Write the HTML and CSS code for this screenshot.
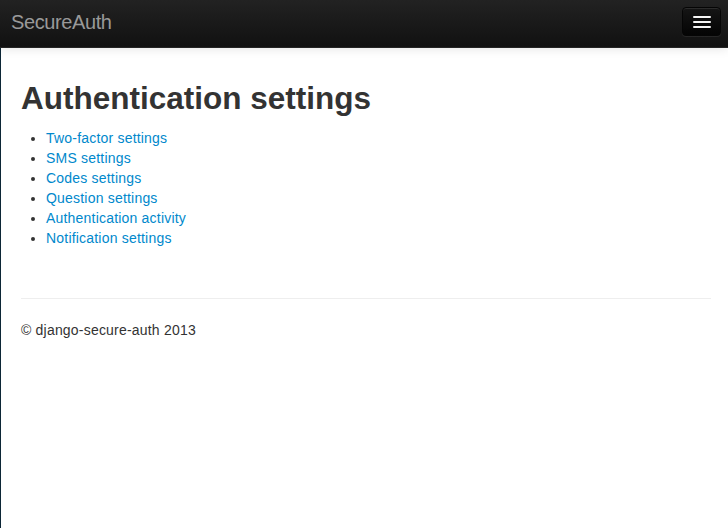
FILE: index.html
```html
<!DOCTYPE html>
<html lang="en">
<head>
<meta charset="utf-8">
<title>Authentication settings</title>
<link rel="stylesheet" href="styles.css">
</head>
<body>
<div class="navbar">
  <a class="brand" href="#">SecureAuth</a>
  <button class="btn-navbar" type="button" aria-label="Toggle navigation">
    <span class="icon-bar"></span>
    <span class="icon-bar"></span>
    <span class="icon-bar"></span>
  </button>
</div>
<div class="page">
  <h2 class="title">Authentication settings</h2>
  <ul class="links">
    <li><a href="#">Two-factor settings</a></li>
    <li><a href="#">SMS settings</a></li>
    <li><a href="#">Codes settings</a></li>
    <li><a href="#">Question settings</a></li>
    <li><a href="#">Authentication activity</a></li>
    <li><a href="#">Notification settings</a></li>
  </ul>
  <hr class="rule">
  <footer class="footer">
    <p>&copy; django-secure-auth 2013</p>
  </footer>
</div>
</body>
</html>
```

FILE: styles.css
```css
html, body {
  margin: 0;
  padding: 0;
  background: #fff;
}
body {
  font-family: "Liberation Sans", Arial, Helvetica, sans-serif;
  font-size: 14px;
  line-height: 20px;
  color: #333;
}
.navbar {
  position: relative;
  z-index: 2;
  height: 47px;
  border-bottom: 1px solid #252525;
  background: linear-gradient(to bottom, #222 0%, #111 100%);
  box-shadow: 0 1px 10px rgba(0, 0, 0, 0.1);
  display: flex;
  align-items: flex-start;
  justify-content: space-between;
}
.brand {
  display: block;
  margin: 12px 0 0 11px;
  font-size: 20px;
  line-height: 20px;
  color: #999;
  text-decoration: none;
  letter-spacing: -0.4px;
}
.btn-navbar {
  margin: 7px 7px 0 0;
  padding: 7px 10px;
  width: 39px;
  height: 29px;
  box-sizing: border-box;
  border: 1px solid #050505;
  border-radius: 4px;
  background: linear-gradient(to bottom, #151515, #040404);
  box-shadow: inset 0 1px 0 rgba(255, 255, 255, 0.1), 0 1px 0 rgba(255, 255, 255, 0.075);
  display: flex;
  flex-direction: column;
  gap: 3px;
  align-items: center;
  justify-content: center;
  cursor: pointer;
}
.icon-bar {
  display: block;
  width: 18px;
  height: 2px;
  border-radius: 1px;
  background: #f5f5f5;
  box-shadow: 0 1px 0 rgba(0, 0, 0, 0.25);
}
.page {
  border-left: 1px solid #0c2636;
  padding: 20px 17px 0 20px;
  min-height: calc(100vh - 48px);
  box-sizing: border-box;
}
.title {
  margin: 10px 0 10px 0;
  font-size: 31.5px;
  line-height: 40px;
  font-weight: bold;
  color: #333;
}
.links {
  margin: 0 0 50px 25px;
  padding: 0;
  letter-spacing: 0.2px;
}
.links a {
  color: #0088cc;
  text-decoration: none;
}
.rule {
  margin: 20px 0;
  border: 0;
  border-top: 1px solid #eee;
  border-bottom: 1px solid #fff;
}
.footer p {
  margin: 0 0 10px;
  letter-spacing: 0.2px;
}
```
